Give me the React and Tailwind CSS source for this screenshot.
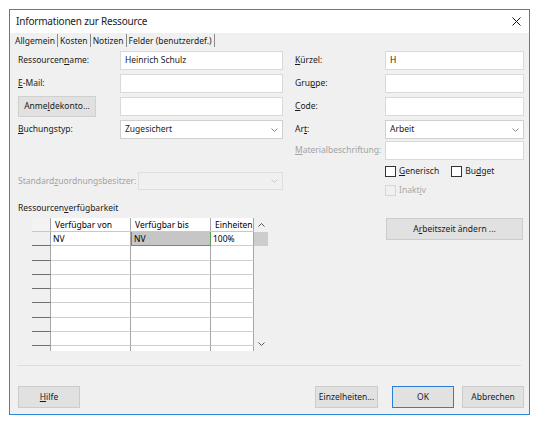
import React from "react";

const FONT = { fontFamily: '"Noto Sans", "Open Sans", sans-serif' };

function Chevron({ className = "", up = false }) {
  return (
    <svg width="7" height="4" viewBox="0 0 7 4" className={className}>
      <polyline
        points={up ? "0.5,3.5 3.5,0.5 6.5,3.5" : "0.5,0.5 3.5,3.5 6.5,0.5"}
        fill="none"
        stroke="currentColor"
        strokeWidth="1"
      />
    </svg>
  );
}

function TextBox({ value = "", width }) {
  return (
    <div
      className={`${width} shrink-0 h-[19px] bg-white border border-[#d9d9d9] flex items-center px-[4px] text-[8.5px] text-[#1a1a1a]`}
    >
      {value}
    </div>
  );
}

function Select({ value = "", width, disabled = false }) {
  return (
    <div
      className={`${width} shrink-0 flex items-center justify-between px-[4px] text-[8.5px] border ${
        disabled
          ? "h-[18px] bg-[#f0f0f0] border-[#dedede] text-[#b0b0b0]"
          : "h-[19px] bg-white border-[#cfcfcf] text-[#1a1a1a]"
      }`}
    >
      <span>{value}</span>
      <Chevron className={disabled ? "text-[#c8c8c8]" : "text-[#8a8a8a]"} />
    </div>
  );
}

function Label({ children, width, disabled = false }) {
  return (
    <div
      className={`${width} shrink-0 text-[8.5px] ${
        disabled ? "text-[#a3a3a3]" : "text-[#1a1a1a]"
      }`}
    >
      {children}
    </div>
  );
}

function CheckBox({ label, disabled = false }) {
  return (
    <div className="flex items-center gap-[3px]">
      <div
        className={`w-[11px] h-[11px] border ${
          disabled ? "border-[#d6d6d6] bg-[#f0f0f0]" : "border-[#333] bg-white"
        }`}
      />
      <span
        className={`text-[8.5px] ${
          disabled ? "text-[#a8a8a8]" : "text-[#1a1a1a]"
        }`}
      >
        {label}
      </span>
    </div>
  );
}

function Button({ children, width, primary = false }) {
  return (
    <div
      className={`${width} shrink-0 h-[22px] flex items-center justify-center bg-[#e1e1e1] border text-[8.5px] text-[#1a1a1a] ${
        primary ? "border-[#2a7fd4]" : "border-[#cccccc]"
      }`}
    >
      {children}
    </div>
  );
}

const cols = ["w-[19px]", "w-[80px]", "w-[80px]", "w-[43px]"];

function GridTable() {
  const header = ["", "Verfügbar von", "Verfügbar bis", "Einheiten"];
  const rows = [["", "NV", "NV", "100%"]];
  for (let i = 0; i < 8; i++) rows.push(["", "", "", ""]);

  return (
    <div className="ml-[14px] mt-[4px] w-[236px] h-[133px] flex overflow-hidden">
      <div className="flex flex-col bg-white">
        <div className="flex h-[14px] border-b border-[#c8c8c8]">
          {header.map((h, i) => (
            <div
              key={i}
              className={`${cols[i]} border-r border-[#a6a6a6] px-[4px] text-[8.5px] leading-[13px] ${
                i === 0 ? "bg-[#f3f3f3]" : "bg-white"
              }`}
            >
              {h}
            </div>
          ))}
        </div>
        {rows.map((r, ri) => (
          <div key={ri} className="flex h-[14.3px] shrink-0">
            {r.map((c, ci) => {
              if (ci === 0)
                return (
                  <div
                    key={ci}
                    className={`${cols[0]} bg-[#f0f0f0] border-r border-b border-r-[#a6a6a6] border-b-[#6e6e6e]`}
                  />
                );
              const selected = ri === 0 && ci === 2;
              return (
                <div
                  key={ci}
                  className={`${cols[ci]} px-[2px] text-[8.5px] leading-[13px] border-r border-b ${
                    selected
                      ? "bg-[#c6c6c6] border-l border-[#5a9e5a] border-t-0"
                      : "bg-white border-r-[#a6a6a6] border-b-[#cfcfcf]"
                  }`}
                >
                  {c}
                </div>
              );
            })}
          </div>
        ))}
      </div>
      <div className="w-[14px] bg-[#f0f0f0] flex flex-col items-center">
        <div className="h-[14px] flex items-center">
          <Chevron up className="text-[#555]" />
        </div>
        <div className="w-full h-[14px] bg-[#cdcdcd]" />
        <div className="mt-auto mb-[5px]">
          <Chevron className="text-[#555]" />
        </div>
      </div>
    </div>
  );
}

export default function App() {
  return (
    <div className="w-[538px] h-[422px] bg-white pt-[9px] pl-[9px]" style={FONT}>
      <div className="w-[521px] h-[406px] border border-[#2b88d8] bg-[#f0f0f0] flex flex-col">
        {/* Title bar */}
        <div className="h-[23px] bg-white flex items-center justify-between pl-[6px] pr-[8px]">
          <span className="text-[10px] tracking-[-0.2px] text-[#1a1a1a]">
            Informationen zur Ressource
          </span>
          <svg width="9" height="9" viewBox="0 0 9 9">
            <path d="M0.5 0.5 L8.5 8.5 M8.5 0.5 L0.5 8.5" stroke="#111" strokeWidth="1" />
          </svg>
        </div>

        {/* Tabs */}
        <div className="h-[15px] flex items-center pl-[3px] text-[8.5px] text-[#1a1a1a]">
          {["Allgemein", "Kosten", "Notizen", "Felder (benutzerdef.)"].map((t) => (
            <div key={t} className="px-[2px] h-[13px] leading-[13px] border-r border-[#8a8a8a]">
              {t}
            </div>
          ))}
        </div>

        {/* Top fields */}
        <div className="pl-[8px] pr-[5px] pt-[3px] flex flex-col gap-[4px]">
          <div className="flex items-center h-[19px]">
            <Label width="w-[102px]">
              Ressourcen<u>n</u>ame:
            </Label>
            <TextBox width="w-[163px]" value="Heinrich Schulz" />
            <div className="w-[12px] shrink-0" />
            <Label width="w-[90px]">
              <u>K</u>ürzel:
            </Label>
            <TextBox width="w-[139px]" value="H" />
          </div>
          <div className="flex items-center h-[19px]">
            <Label width="w-[102px]">
              <u>E</u>-Mail:
            </Label>
            <TextBox width="w-[163px]" />
            <div className="w-[12px] shrink-0" />
            <Label width="w-[90px]">
              Gru<u>p</u>pe:
            </Label>
            <TextBox width="w-[139px]" />
          </div>
          <div className="flex items-center h-[19px]">
            <div className="w-[102px] shrink-0">
              <div className="w-[78px] h-[21px] bg-[#e1e1e1] border border-[#d0d0d0] flex items-center justify-center text-[8.5px] text-[#1a1a1a]">
                Anme<u>l</u>dekonto...
              </div>
            </div>
            <TextBox width="w-[163px]" />
            <div className="w-[12px] shrink-0" />
            <Label width="w-[90px]">
              <u>C</u>ode:
            </Label>
            <TextBox width="w-[139px]" />
          </div>
          <div className="flex items-center h-[19px]">
            <Label width="w-[102px]">
              <u>B</u>uchungstyp:
            </Label>
            <Select width="w-[163px]" value="Zugesichert" />
            <div className="w-[12px] shrink-0" />
            <Label width="w-[90px]">
              Ar<u>t</u>:
            </Label>
            <Select width="w-[139px]" value="Arbeit" />
          </div>
        </div>

        {/* Lower section */}
        <div className="pl-[8px] pr-[5px] flex">
          <div className="w-[265px] shrink-0 pt-[33px]">
            <div className="flex items-center h-[18px]">
              <Label width="w-[120px]" disabled>
                Standard<u>z</u>uordnungsbesitzer:
              </Label>
              <Select width="w-[145px]" disabled />
            </div>
            <div className="mt-[12px] text-[8.5px] leading-[12px] text-[#1a1a1a]">
              Ressourcen<u>v</u>erfügbarkeit
            </div>
            <GridTable />
          </div>
          <div className="w-[12px] shrink-0" />
          <div className="pt-[2px]">
            <div className="flex items-center h-[19px]">
              <Label width="w-[90px]" disabled>
                <u>M</u>aterialbeschriftung:
              </Label>
              <TextBox width="w-[139px]" />
            </div>
            <div className="pl-[90px] mt-[6px] flex gap-[12px] h-[11px] items-center">
              <CheckBox label={<><u>G</u>enerisch</>} />
              <CheckBox label={<>Bu<u>d</u>get</>} />
            </div>
            <div className="pl-[90px] mt-[8px] h-[11px] flex items-center">
              <CheckBox disabled label={<>Inakt<u>i</u>v</>} />
            </div>
            <div className="pl-[91px] mt-[22px]">
              <Button width="w-[137px]">
                A<u>r</u>beitszeit ändern ...
              </Button>
            </div>
          </div>
        </div>

        {/* Footer */}
        <div className="mt-auto pb-[6px]">
          <div className="ml-[7px] mr-[8px] h-px bg-[#dcdcdc]" />
          <div className="mt-[20px] flex items-center pl-[8px] pr-[5px]">
            <Button width="w-[62px]">
              <u>H</u>ilfe
            </Button>
            <div className="ml-auto flex gap-[14px]">
              <Button width="w-[63px]">Einzelheiten...</Button>
              <div className="flex gap-[8px]">
                <Button width="w-[62px]" primary>
                  OK
                </Button>
                <Button width="w-[62px]">Abbrechen</Button>
              </div>
            </div>
          </div>
        </div>
      </div>
    </div>
  );
}
